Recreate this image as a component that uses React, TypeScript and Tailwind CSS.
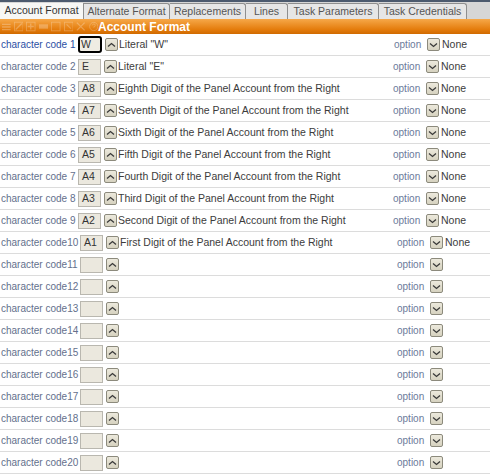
import React from "react";

const tabs = [
  { label: "Account Format", w: "w-[84px]", active: true },
  { label: "Alternate Format", w: "w-[86px]" },
  { label: "Replacements", w: "w-[76px]" },
  { label: "Lines", w: "w-[42px]" },
  { label: "Task Parameters", w: "w-[91px]" },
  { label: "Task Credentials", w: "w-[88px]" },
];

const rows: { value: string; text: string }[] = [
  { value: "W", text: 'Literal "W"' },
  { value: "E", text: 'Literal "E"' },
  { value: "A8", text: "Eighth Digit of the Panel Account from the Right" },
  { value: "A7", text: "Seventh Digit of the Panel Account from the Right" },
  { value: "A6", text: "Sixth Digit of the Panel Account from the Right" },
  { value: "A5", text: "Fifth Digit of the Panel Account from the Right" },
  { value: "A4", text: "Fourth Digit of the Panel Account from the Right" },
  { value: "A3", text: "Third Digit of the Panel Account from the Right" },
  { value: "A2", text: "Second Digit of the Panel Account from the Right" },
  { value: "A1", text: "First Digit of the Panel Account from the Right" },
  ...Array.from({ length: 10 }, () => ({ value: "", text: "" })),
];

function SmallButton({ down }: { down?: boolean }) {
  return (
    <span className="flex h-[13px] w-[13px] shrink-0 items-center justify-center rounded-[2px] border border-[#8c8a7c] bg-[linear-gradient(#ece9dc,#d6d2c0)]">
      <svg width="9" height="6" viewBox="0 0 9 6">
        {down ? (
          <path d="M1 1.5 L4.5 4.5 L8 1.5" fill="none" stroke="#3a3a3a" strokeWidth="1.3" />
        ) : (
          <path d="M1 4.5 L4.5 1.5 L8 4.5" fill="none" stroke="#3a3a3a" strokeWidth="1.3" />
        )}
      </svg>
    </span>
  );
}

function ToolIcons() {
  return (
    <div className="flex w-[98px] items-center gap-[3px] pl-[2px] opacity-25">
      <svg width="10" height="10" viewBox="0 0 10 10">
        <path d="M0 2h10M0 5h10M0 8h10" stroke="#fff" strokeWidth="1.5" />
      </svg>
      <svg width="11" height="11" viewBox="0 0 11 11">
        <rect x="0.5" y="0.5" width="10" height="10" fill="none" stroke="#fff" />
        <path d="M2 9 L9 2" stroke="#fff" strokeWidth="1.5" />
      </svg>
      <svg width="11" height="11" viewBox="0 0 11 11">
        <rect x="0.5" y="0.5" width="10" height="10" fill="none" stroke="#fff" />
        <path d="M5.5 2v7M2 5.5h7" stroke="#fff" strokeWidth="1.5" />
      </svg>
      <svg width="11" height="11" viewBox="0 0 11 11">
        <rect x="0" y="3" width="11" height="5" fill="#fff" />
      </svg>
      <svg width="11" height="11" viewBox="0 0 11 11">
        <rect x="0.5" y="0.5" width="10" height="10" fill="none" stroke="#fff" />
      </svg>
      <svg width="11" height="11" viewBox="0 0 11 11">
        <path d="M3 3 L8 8" stroke="#fff" strokeWidth="1.3" />
        <rect x="0.5" y="0.5" width="10" height="10" fill="none" stroke="#fff" />
      </svg>
      <svg width="11" height="11" viewBox="0 0 11 11">
        <path d="M1 1 L10 10M10 1 L1 10" stroke="#fff" strokeWidth="1.5" />
      </svg>
      <svg width="11" height="11" viewBox="0 0 11 11">
        <circle cx="5.5" cy="5.5" r="4.8" fill="none" stroke="#fff" />
        <path d="M4 4.2 a1.6 1.6 0 1 1 1.6 1.6 v1" fill="none" stroke="#fff" />
      </svg>
    </div>
  );
}

export default function App() {
  return (
    <div className="h-[476px] w-[490px] overflow-hidden bg-white font-['Liberation_Sans',Arial,sans-serif] text-[10.5px]">
      {/* tab strip */}
      <div className="flex h-[19px] items-end border-t-2 border-[#4c5a6e] bg-[#d6d6d6]">
        {tabs.map((t) => (
          <div
            key={t.label}
            className={
              t.active
                ? `${t.w} flex h-[16px] items-center justify-center border-r border-[#8f8f8f] bg-[#f7f7f5] text-[#333]`
                : `${t.w} flex h-[16px] items-center justify-center rounded-tr-[3px] border-r border-t border-[#8f8f8f] bg-[#e6e6e6] text-[#555]`
            }
          >
            {t.label}
          </div>
        ))}
      </div>

      {/* header bar */}
      <div className="flex h-[15px] items-center bg-[linear-gradient(#f6a849,#e47c0c_70%,#d06a00)]">
        <ToolIcons />
        <span className="text-[12px] font-bold leading-none text-white">Account Format</span>
      </div>

      {/* rows */}
      <div>
        {rows.map((r, i) => {
          const n = i + 1;
          const label = n < 10 ? `character code ${n}` : `character code${n}`;
          const wide = n >= 10;
          return (
            <div key={n} className="flex h-[22px] items-center border-b border-[#dcdcdc]">
              <span
                className={`${wide ? "w-[80px]" : "w-[78px]"} shrink-0 pl-[1px] text-[10px] whitespace-nowrap ${
                  n === 1 ? "text-[#2b4fa3]" : "text-[#64708c]"
                }`}
              >
                {label}
              </span>
              <span
                className={
                  n === 1
                    ? "flex h-[17px] w-[24px] shrink-0 items-center rounded-[3px] border-2 border-black bg-[#efece3] pl-[1px] text-[#333]"
                    : "flex h-[16px] w-[23px] shrink-0 items-center border border-[#b9b7af] bg-[#ebe8de] pl-[3px] text-[#333]"
                }
              >
                {r.value}
              </span>
              <span className="ml-[3px]">
                <SmallButton />
              </span>
              <span className={`${wide ? "w-[278px]" : "w-[276px]"} shrink-0 truncate pl-[1px] text-[#3c3c3c]`}>
                {r.text}
              </span>
              <span className="w-[33px] shrink-0 text-[10px] text-[#6c7a9a]">option</span>
              <SmallButton down />
              {r.value && <span className="pl-[2px] text-[#3c3c3c]">None</span>}
            </div>
          );
        })}
      </div>
    </div>
  );
}
